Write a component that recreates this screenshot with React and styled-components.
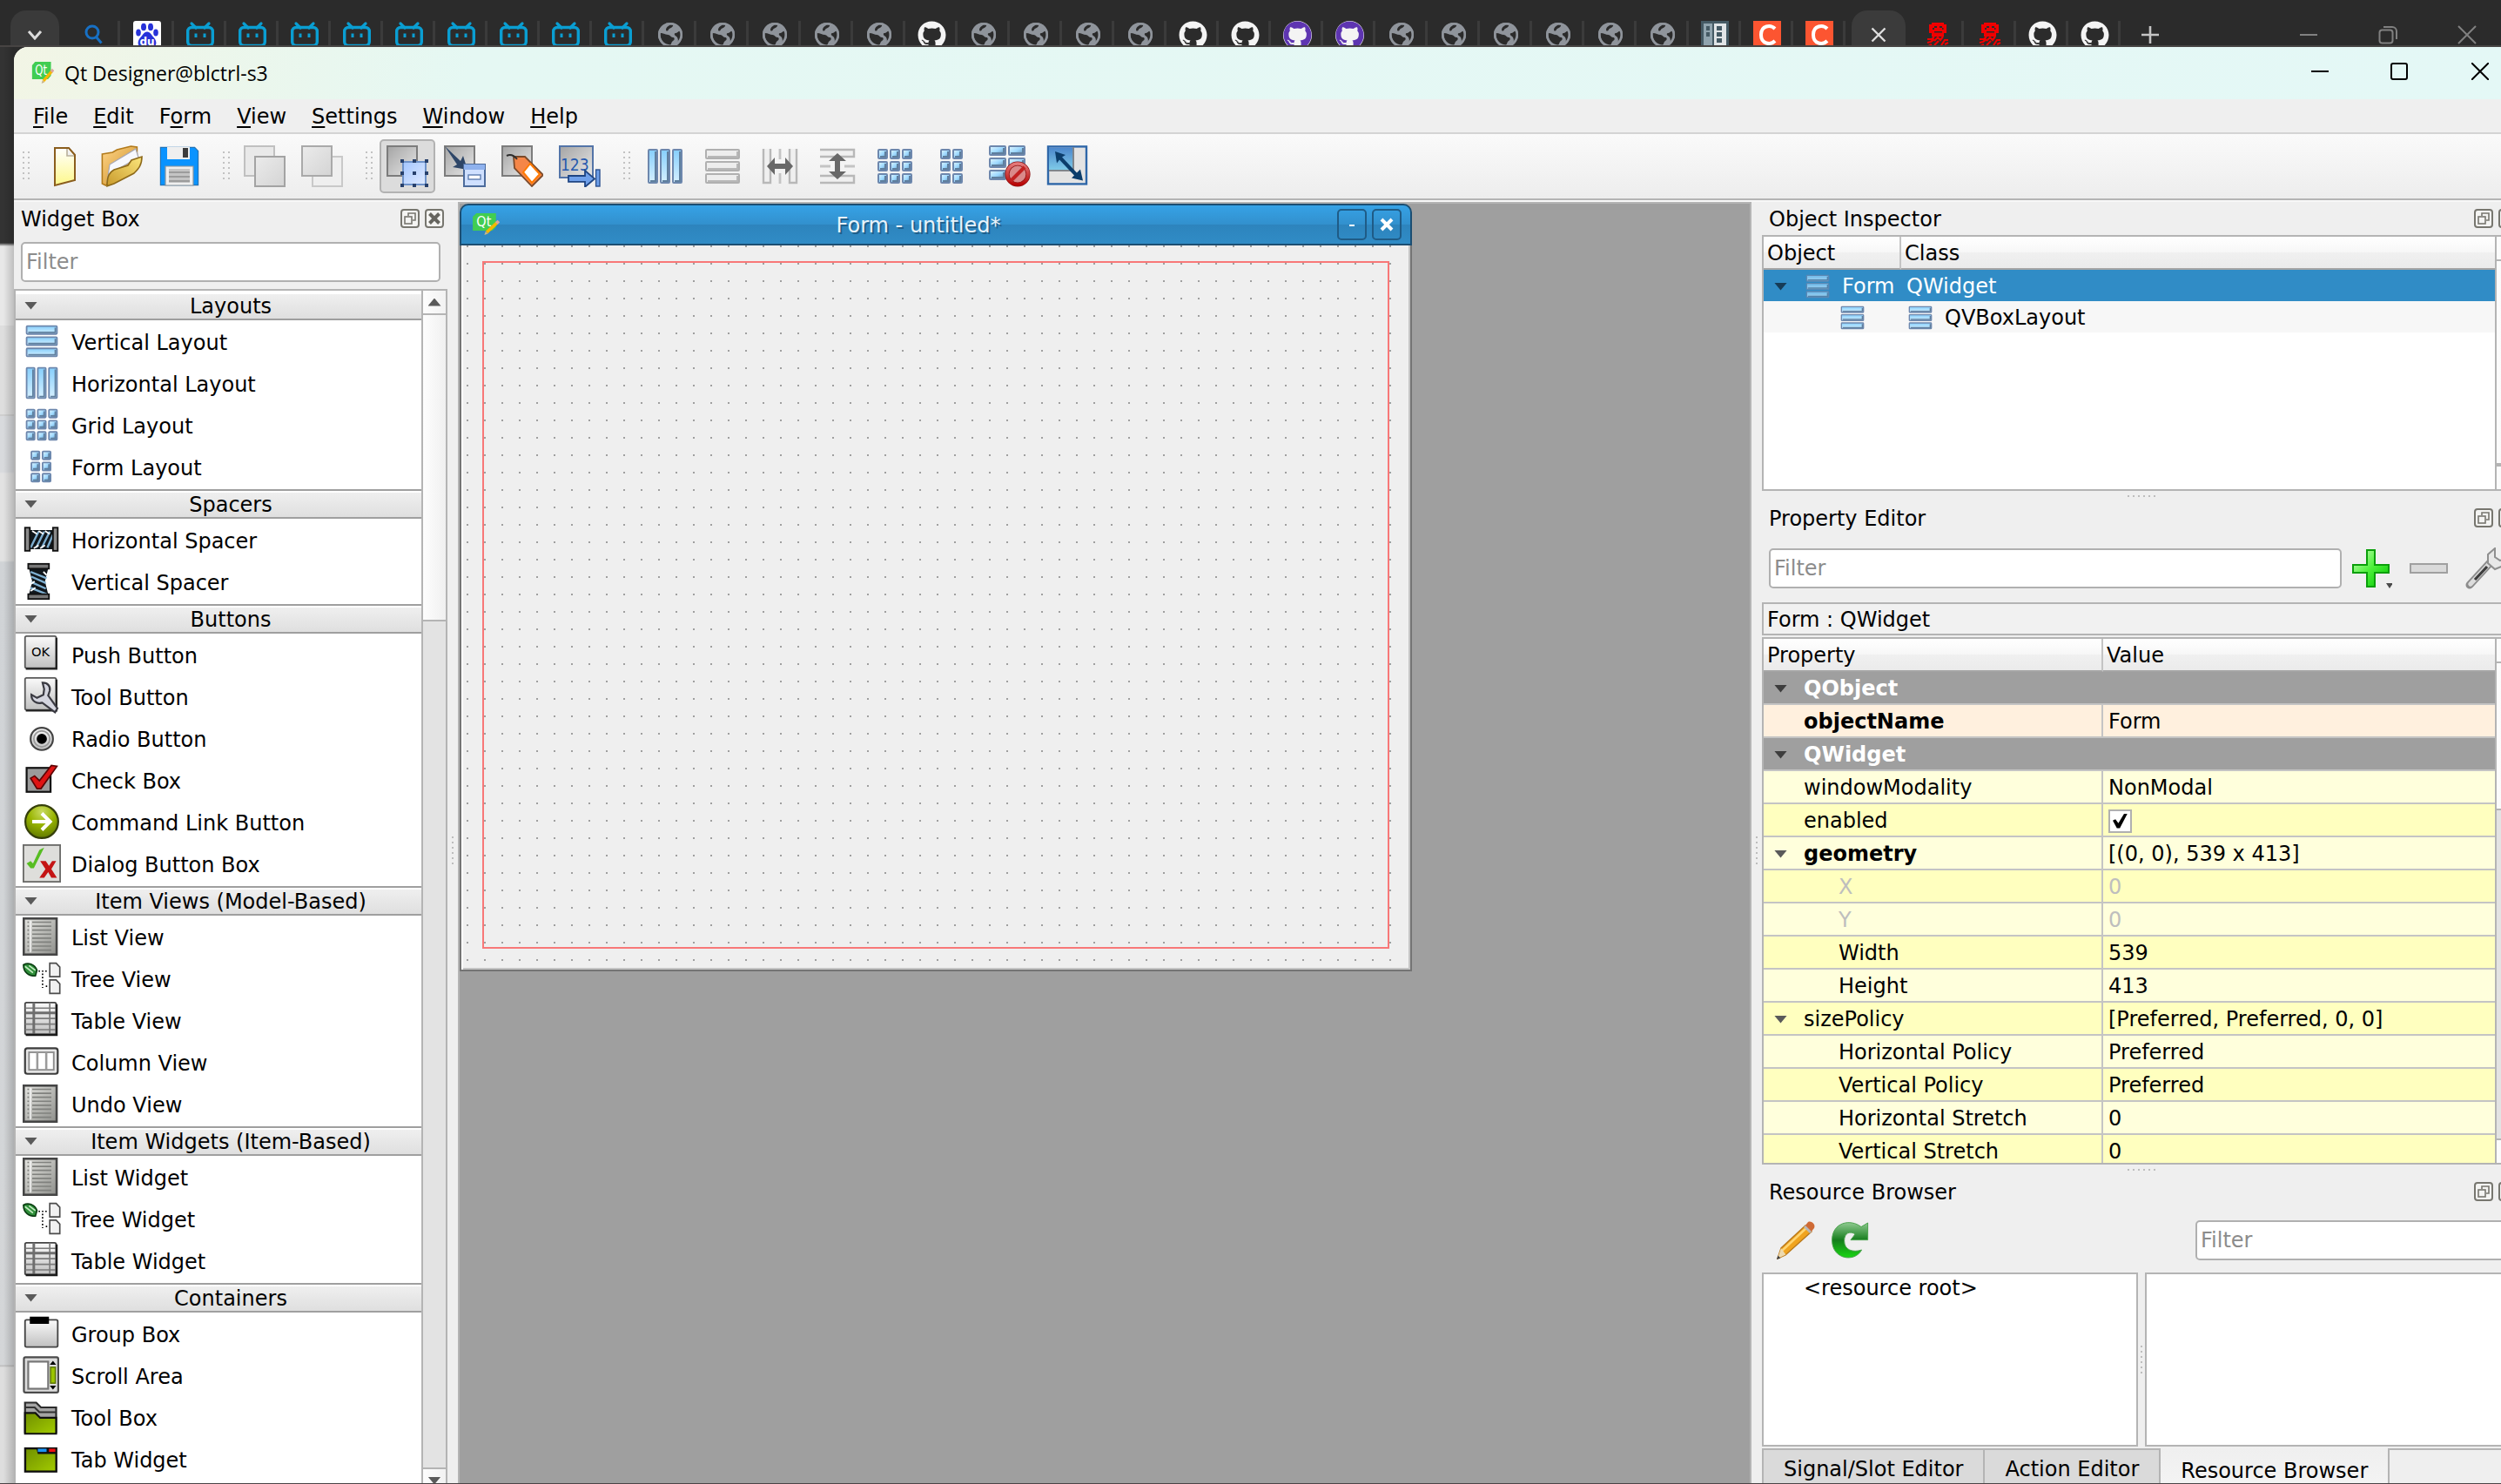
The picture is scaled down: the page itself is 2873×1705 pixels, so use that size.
import React, { useState } from 'react';
import styled, { createGlobalStyle } from 'styled-components';
import { FaGithub } from 'react-icons/fa';

const GlobalStyle = createGlobalStyle`
  * { box-sizing: border-box; }
  html, body { margin: 0; padding: 0; }
  body {
    font-family: "DejaVu Sans", sans-serif;
    font-size: 24px;
    line-height: 28px;
    color: #000;
    overflow: hidden;
  }
  button, input { font: inherit; color: inherit; }
  svg { display: block; flex: none; }
`;

/* ---------- shared gradients ---------- */

const Gradients = () => (
  <HiddenSvg aria-hidden="true">
    <defs>
      <linearGradient id="paper" x1="0" y1="0" x2="0" y2="1">
        <stop offset="0" stopColor="#fff" /><stop offset="1" stopColor="#fdf88a" />
      </linearGradient>
      <linearGradient id="folder" x1="0" y1="0" x2="1" y2="1">
        <stop offset="0" stopColor="#ffd58a" /><stop offset="1" stopColor="#c98a1c" />
      </linearGradient>
      <linearGradient id="folderFront" x1="1" y1="0" x2="0" y2="1">
        <stop offset="0" stopColor="#fbe67c" /><stop offset="1" stopColor="#c99a2c" />
      </linearGradient>
      <linearGradient id="greySq" x1="1" y1="1" x2="0" y2="0">
        <stop offset="0" stopColor="#e8e8e8" /><stop offset="1" stopColor="#a4a4a4" />
      </linearGradient>
      <linearGradient id="greyPale" x1="0" y1="0" x2="1" y2="1">
        <stop offset="0" stopColor="#ebebeb" /><stop offset="1" stopColor="#d4d4d4" />
      </linearGradient>
      <linearGradient id="blueSq" x1="0" y1="0" x2="1" y2="1">
        <stop offset="0" stopColor="#a4c6ff" /><stop offset="1" stopColor="#dfeaff" />
      </linearGradient>
      <linearGradient id="cellBlue" x1="0" y1="0" x2="1" y2="1">
        <stop offset="0" stopColor="#e4f7ff" /><stop offset="0.5" stopColor="#9cd8ff" /><stop offset="1" stopColor="#557b9c" />
      </linearGradient>
      <linearGradient id="barBlue" x1="0" y1="0" x2="0" y2="1">
        <stop offset="0" stopColor="#86cffc" /><stop offset="1" stopColor="#d6f0ff" />
      </linearGradient>
      <linearGradient id="lightBtn" x1="0" y1="0" x2="0" y2="1">
        <stop offset="0" stopColor="#fafafa" /><stop offset="1" stopColor="#c0c0c0" />
      </linearGradient>
      <linearGradient id="darkList" x1="0" y1="0" x2="1" y2="1">
        <stop offset="0" stopColor="#e4e4e0" /><stop offset="1" stopColor="#8f908c" />
      </linearGradient>
      <linearGradient id="lime" x1="0" y1="0" x2="1" y2="1">
        <stop offset="0" stopColor="#6f8f00" /><stop offset="1" stopColor="#a3cc00" />
      </linearGradient>
      <radialGradient id="limeBall" cx="0.5" cy="0.2" r="0.8">
        <stop offset="0" stopColor="#c9db62" /><stop offset="0.5" stopColor="#98b400" /><stop offset="1" stopColor="#627a00" />
      </radialGradient>
      <linearGradient id="plusGreen" x1="0" y1="0" x2="1" y2="1">
        <stop offset="0" stopColor="#d2ffc4" /><stop offset="0.5" stopColor="#4df03a" /><stop offset="1" stopColor="#00c400" />
      </linearGradient>
      <linearGradient id="reloadGreen" x1="0" y1="0" x2="0" y2="1">
        <stop offset="0" stopColor="#8fca90" /><stop offset="0.5" stopColor="#157d1c" /><stop offset="1" stopColor="#19d613" />
      </linearGradient>
      <linearGradient id="screenBlue" x1="0" y1="0" x2="0" y2="1">
        <stop offset="0" stopColor="#4b86cc" /><stop offset="1" stopColor="#7fcbe8" />
      </linearGradient>
      <linearGradient id="redBall" x1="0" y1="0" x2="0" y2="1">
        <stop offset="0" stopColor="#e47a7a" /><stop offset="1" stopColor="#b80505" />
      </linearGradient>
    </defs>
  </HiddenSvg>
);

/* ---------- icons ---------- */

const Icon = ({ size = 48, children }) => (
  <svg width={size} height={size} viewBox="0 0 24 24" aria-hidden="true">{children}</svg>
);

const Cell = ({ x, y, w, h, grey }) => (
  <g>
    <rect x={x + 0.5} y={y + 0.5} width={w - 1} height={h - 1} rx="0.5"
      fill={grey ? '#ededed' : w > 12 || h > 12 ? 'url(#barBlue)' : 'url(#cellBlue)'}
      stroke={grey ? '#b0b0b0' : '#6d87ad'} />
    <path d={`M${x + 1.5} ${y + h - 1.5}H${x + w - 1.5}V${y + 1.5}`} fill="none"
      stroke={grey ? '#b8b8b8' : '#5f7f9e'} strokeWidth="1" />
  </g>
);

const VLayout = ({ size, grey }) => (
  <Icon size={size}>{[2, 9, 16].map((y) => <Cell key={y} x={2} y={y} w={20} h={6} grey={grey} />)}</Icon>
);

const HLayout = ({ size, grey }) => (
  <Icon size={size}>{[2, 9, 16].map((x) => <Cell key={x} x={x} y={2} w={6} h={20} grey={grey} />)}</Icon>
);

const GridLayout = ({ size }) => (
  <Icon size={size}>
    {[2, 9, 16].map((y) => [2, 9, 16].map((x) => <Cell key={x + '-' + y} x={x} y={y} w={6} h={6} />))}
  </Icon>
);

const FormLayout = ({ size }) => (
  <Icon size={size}>
    {[2, 9, 16].map((y) => [5, 12].map((x) => <Cell key={x + '-' + y} x={x} y={y} w={6} h={6} />))}
  </Icon>
);

const GreySquare = () => (
  <rect x="0.5" y="0.5" width="17" height="17" fill="url(#greySq)" stroke="#7c7c7c" />
);

const NewIcon = () => (
  <Icon>
    <path d="M6.500 1.500h8l3.500 4v14.500l-11.500 3z" fill="url(#paper)" stroke="#8a5d1d" />
    <path d="M13.500 2v4h4" fill="#f1f1f1" stroke="#b9b09a" strokeWidth="0.8" />
  </Icon>
);

const OpenIcon = () => (
  <Icon>
    <path d="M0.700 5l6-1 2.500-1.500 8-2 3.500.500v9l-18 13-2-1z" fill="url(#folder)" stroke="#b27a1b" strokeWidth="0.8" />
    <path d="M5 11l15-9 1.500 5-16 9-2 5z" fill="#f7f8fd" stroke="#a8a8b4" strokeWidth="0.6" />
    <path d="M3.500 23.400c0-6 1.500-8 4-9.400l8-2.500 2-3 6-2c0 5-2 7-4.500 9.500L7.500 22z" fill="url(#folderFront)" stroke="#8e6a1a" strokeWidth="0.8" />
  </Icon>
);

const SaveIcon = () => (
  <Icon>
    <path d="M1.200 1.200h19.600l2 2v19.600H1.200z" fill="#0a93ff" stroke="#2272b4" strokeWidth="0.6" />
    <path d="M5 1h13v7H5z" fill="#efefef" />
    <path d="M14 1.500h3v5.500h-3z" fill="#3c3c3c" />
    <path d="M4 12h16v11H4z" fill="#efefef" stroke="#8a949c" strokeWidth="0.6" />
    <path d="M6 13.500h12v8H6z" fill="#c4c4c4" />
    <path d="M6 15.500h12M6 18h12M6 20.500h12" stroke="#8f8f8f" strokeWidth="0.8" />
  </Icon>
);

const FrontIcon = ({ back }) => (
  <Icon>
    {back ? (
      <>
        <rect x="6.500" y="6.500" width="17" height="17" fill="#efefef" stroke="#c9c9c9" />
        <rect x="0.500" y="0.500" width="17" height="17" fill="url(#greyPale)" stroke="#a9a9a9" />
      </>
    ) : (
      <>
        <rect x="0.500" y="0.500" width="17" height="17" fill="#e9e9e9" stroke="#c0c0c0" />
        <rect x="6.500" y="6.500" width="17" height="17" fill="url(#greyPale)" stroke="#a3a3a3" />
      </>
    )}
  </Icon>
);

const EditWidgetsIcon = () => (
  <Icon>
    <GreySquare />
    <rect x="9.500" y="9.500" width="13" height="13" fill="url(#blueSq)" stroke="#6e92c9" />
    {[8, 15, 22].map((y) => [8, 15, 22].map((x) => (
      <rect key={x + '-' + y} x={x} y={y} width="2" height="2" fill="#27406b" />
    )))}
  </Icon>
);

const SignalsIcon = () => (
  <Icon>
    <GreySquare />
    <path d="M0.500 0.500l9 8.500 1.500-3 2.500 8-8.500-1.500 2.500-1.500z" fill="#2e4668" />
    <rect x="11.500" y="11" width="12" height="12.500" fill="#cfe0ff" stroke="#4d6c9c" />
    <rect x="11.500" y="11" width="12" height="3" fill="#8fb2ee" />
    <rect x="14" y="17" width="7" height="2.500" fill="#fff" stroke="#5d7db0" strokeWidth="0.700" />
  </Icon>
);

const BuddyIcon = () => (
  <Icon>
    <GreySquare />
    <path d="M7 6.500h6.500L24 17l-6.500 6.500L7.500 13z" fill="#f58648" stroke="#7b4a2a" strokeWidth="0.900" />
    <path d="M16.500 10.500l5.500 6-4.500 5-5-6z" fill="#fff" stroke="#ff7a00" strokeWidth="1" />
    <path d="M3 6c2-1 4-.500 6 2" fill="none" stroke="#2e2e2e" />
  </Icon>
);

const TabOrderIcon = () => (
  <Icon>
    <rect x="0.500" y="0.500" width="19" height="18" fill="url(#greySq)" stroke="#5374a8" />
    <text x="1" y="14.500" fontSize="9.500" fontFamily="DejaVu Sans Condensed, DejaVu Sans, sans-serif" fill="#2559ae">123</text>
    <path d="M5.500 17.500h9.500v-3l5.500 4.700-5.500 4.700v-3H5.500z" fill="#6fa0ea" stroke="#1f4583" strokeWidth="0.900" />
    <rect x="21.300" y="14" width="2.200" height="9.500" fill="#6fa0ea" stroke="#2b518f" strokeWidth="0.700" />
  </Icon>
);

const SplitHIcon = () => (
  <Icon>
    <path d="M2.500 2v19.500h4V2M21.500 2v19.500h-4V2" fill="#f0f0f0" stroke="#b8b8b8" strokeWidth="1.200" />
    <path d="M12 2v20" stroke="#c4c4c4" strokeWidth="1.400" strokeDasharray="6 8" />
    <path d="M4.500 12l4.500-5v3.500h6V7l4.500 5-4.500 5v-3.500H9V17z" fill="#686868" />
  </Icon>
);

const SplitVIcon = () => (
  <Icon>
    <path d="M2 2.500h19.500v4H2M2 21.500h19.500v-4H2" fill="#f0f0f0" stroke="#b8b8b8" strokeWidth="1.200" />
    <path d="M2 12h20" stroke="#c4c4c4" strokeWidth="1.400" strokeDasharray="6 8" />
    <path d="M12 4.500l5 4.500h-3.500v6H17l-5 4.500L7 15h3.500V9H7z" fill="#686868" />
  </Icon>
);

const BreakIcon = () => (
  <Icon>
    {[0, 7, 14].map((y) => [0, 11].map((x) => <Cell key={x + '-' + y} x={x} y={y} w={10} h={6} />))}
    <circle cx="16.500" cy="16.500" r="6" fill="#d98a8a" stroke="#8e1414" strokeWidth="2.600" />
    <circle cx="16.500" cy="16.500" r="6" fill="none" stroke="url(#redBall)" strokeWidth="1.800" />
    <path d="M12.500 20.500l8-8" stroke="#c22222" strokeWidth="2" />
  </Icon>
);

const AdjustIcon = () => (
  <Icon>
    <rect x="1" y="0.700" width="22" height="21.500" fill="#e3e3e3" stroke="#2f67a8" strokeWidth="1.200" />
    <path d="M1.500 1.200h14v13h-14z" fill="url(#screenBlue)" />
    <path d="M15.500 1v13.500H1.500" fill="none" stroke="#80868c" strokeWidth="1" />
    <path d="M5 3.500l6 2-2 1.200 8.500 9 2-2 1.500 6.500-6.500-1.500 1.500-1.500-8.500-9-1.500 2z" fill="#0b3d6b" />
  </Icon>
);

const HSpacer = ({ size }) => (
  <Icon size={size}>
    <rect x="4" y="6" width="16" height="12" fill="#10161b" />
    <path d="M5 17l5-10M8.500 17l5-10M12 17l5-10M15.500 17l3.500-8" stroke="#7fb0d2" strokeWidth="1.300" />
    <path d="M6 6.500l3 2M10 6.500l3 2M14 6.500l3 2M7 17.500l3-2M11 17.500l3-2" stroke="#fff" strokeWidth="1" />
    <rect x="1.500" y="4.500" width="3" height="14.500" fill="#8a8a8a" stroke="#111" />
    <rect x="19" y="4.500" width="3" height="14.500" fill="#8a8a8a" stroke="#111" />
  </Icon>
);

const VSpacer = ({ size }) => (
  <Icon size={size}>
    <path d="M4 4h12l-2 8 2 8H4l2-8z" fill="#10161b" />
    <path d="M5 6l10 4M5.500 9l9 4M5.500 12.500l9 4M5 16l10 4" stroke="#7fb0d2" strokeWidth="1.300" />
    <path d="M4.500 14l3-2M13 6l2 2M5 18l3-2" stroke="#fff" />
    <rect x="3.500" y="1" width="13" height="3" fill="#777" stroke="#111" />
    <rect x="3.500" y="20" width="13" height="3" fill="#777" stroke="#111" />
  </Icon>
);

const PushButtonIcon = ({ size }) => (
  <Icon size={size}>
    <rect x="1.500" y="0.500" width="19.500" height="20" rx="1" fill="url(#lightBtn)" stroke="#5a5a5a" />
    <path d="M2 20.900h19.200V1.500" fill="none" stroke="#222" strokeWidth="1.200" />
    <text x="11.200" y="13" fontSize="8" textAnchor="middle" fontFamily="DejaVu Sans, sans-serif">OK</text>
  </Icon>
);

const ToolButtonIcon = ({ size }) => (
  <Icon size={size}>
    <rect x="1.500" y="0.500" width="19.500" height="20" rx="1" fill="url(#lightBtn)" stroke="#5a5a5a" />
    <path d="M2 20.900h19.200V1.500" fill="none" stroke="#222" strokeWidth="1.200" />
    <path d="M12.500 3.500c3.500 0 5 2.500 4.500 5l-1 3 5.800 8-1.500 2.500-8-6c-3.500 1-7-1-6.800-5l3.500 2 4-2 .500-3.500z" fill="#d4d5df" stroke="#3a3a42" strokeWidth="1.200" />
  </Icon>
);

const RadioIcon = ({ size }) => (
  <Icon size={size}>
    <circle cx="12" cy="12.500" r="7" fill="url(#lightBtn)" stroke="#444" strokeWidth="1.200" />
    <circle cx="12" cy="12.500" r="5" fill="none" stroke="#9a9a9a" />
    <circle cx="12" cy="12.500" r="3.200" fill="#000" />
  </Icon>
);

const CheckIcon = ({ size }) => (
  <Icon size={size}>
    <rect x="2.500" y="4.500" width="15" height="15" fill="#9b9b9b" stroke="#111" strokeWidth="1.200" />
    <path d="M5 11l2.500-1.500 3 3L18 3l3.500.500L11.500 17.500H9z" fill="#df1414" stroke="#5c0505" strokeWidth="0.900" />
  </Icon>
);

const CommandLinkIcon = ({ size }) => (
  <Icon size={size}>
    <circle cx="12" cy="12" r="10.300" fill="url(#limeBall)" stroke="#353f0a" strokeWidth="1.200" />
    <path d="M6 12h10.500M12 6.800l5.200 5.200-5.200 5.200" fill="none" stroke="#fff" strokeWidth="2.200" />
  </Icon>
);

const DialogBoxIcon = ({ size }) => (
  <Icon size={size}>
    <rect x="0.500" y="0.500" width="23" height="23" fill="#dededb" stroke="#6b6b69" />
    <path d="M2.500 12l2.500-1.500 1.500 1.500L10.500 3.500l3-1.500L7 15H5z" fill="#57bd22" />
    <path d="M11 10.500h3.500l2 3 2-3H21l-3 5 3.500 5.500h-3.500l-2-3.500-2.500 3.500h-3l3.800-5.500z" fill="#c41414" />
  </Icon>
);

const ListIcon = ({ size }) => (
  <Icon size={size}>
    <rect x="0.700" y="0.700" width="20.600" height="22.600" fill="url(#darkList)" stroke="#454545" strokeWidth="1.400" />
    <path d="M3 3h1M6 3h12M3 5.500h1M6 5.500h12M3 8h1M6 8h12M3 10.500h1M6 10.500h12M3 13h1M6 13h12M3 15.500h1M6 15.500h12M3 18h1M6 18h12M3 20.500h1M6 20.500h12" stroke="#80817e" strokeWidth="0.900" />
    <path d="M4.900 2v20" stroke="#f4f4f4" strokeWidth="0.800" />
  </Icon>
);

const TreeIcon = ({ size }) => (
  <Icon size={size}>
    <path d="M0.500 3.500c3-1.500 7-.500 8.500 3.500l-1 3.500c-4 0-7.500-2-7.500-7z" fill="#2f8f3a" stroke="#0b3d12" strokeWidth="0.900" />
    <path d="M1.500 4.500l5 4M4 4l4 3" stroke="#c4ecc2" strokeWidth="0.900" />
    <path d="M10 7.500h6M12.500 9v9M14.500 17h2" fill="none" stroke="#000" strokeWidth="0.900" strokeDasharray="0.900 1.200" />
    <path d="M17 2.500h4l2.300 2.500v6H17z" fill="#f1f1f1" stroke="#4c4c4c" strokeWidth="0.900" />
    <path d="M17 13h4l2.300 2.500v6H17z" fill="#f1f1f1" stroke="#4c4c4c" strokeWidth="0.900" />
  </Icon>
);

const TableIcon = ({ size }) => (
  <Icon size={size}>
    <rect x="1.500" y="1" width="19.500" height="20" rx="1" fill="url(#lightBtn)" stroke="#444" />
    <path d="M1.500 4.500h19.500M1.500 11h19.500M1.500 14.500h19.500M1.500 18h19.500M17 1v20" stroke="#7b7b7b" strokeWidth="0.900" />
    <path d="M1.500 7.500h19.500M7 1v20" stroke="#6e6e6e" strokeWidth="1.600" />
    <path d="M2 21.300h19.300V2" fill="none" stroke="#1b1b1b" strokeWidth="1.300" />
  </Icon>
);

const ColumnIcon = ({ size }) => (
  <Icon size={size}>
    <rect x="1.500" y="3.500" width="20.500" height="16" rx="1.500" fill="#e6e6e6" stroke="#3c3c3c" strokeWidth="1.200" />
    <rect x="4" y="6" width="15.500" height="11" fill="#fff" stroke="#8c8c8c" />
    <path d="M9.200 6v11M14.800 6v11" stroke="#9b9b9b" strokeWidth="1.400" />
  </Icon>
);

const GroupIcon = ({ size }) => (
  <Icon size={size}>
    <rect x="1.500" y="3.500" width="20.500" height="17" rx="1" fill="url(#lightBtn)" stroke="#444" />
    <rect x="4.500" y="1.500" width="12" height="4.500" fill="#000" />
  </Icon>
);

const ScrollIcon = ({ size }) => (
  <Icon size={size}>
    <rect x="0.800" y="0.800" width="21.500" height="22" rx="1" fill="#dcdcdc" stroke="#4b4b4b" strokeWidth="1.200" />
    <rect x="3.500" y="3.500" width="12.500" height="17" fill="#fff" stroke="#777" strokeWidth="1.200" />
    <path d="M19 3l2 2.500h-4zM19 21l2-2.500h-4z" fill="#000" />
    <rect x="17.500" y="7" width="3" height="10" fill="#9cc400" stroke="#5b7400" strokeWidth="0.800" />
  </Icon>
);

const ToolBoxIcon = ({ size }) => (
  <Icon size={size}>
    <path d="M1.500 3h7l3 3h9.500v15.500H1.500z" fill="#a5a5a5" stroke="#2b2b2b" strokeWidth="1.200" />
    <path d="M1.500 6h6l3 3h10.500" fill="none" stroke="#333" strokeWidth="1.200" />
    <path d="M1.500 9.500h6.500l3 3h10v10H1.500z" fill="url(#lime)" stroke="#111" strokeWidth="1.200" />
  </Icon>
);

const TabWidgetIcon = ({ size }) => (
  <Icon size={size}>
    <rect x="1.600" y="5.500" width="19.500" height="14.500" fill="url(#lime)" stroke="#111" strokeWidth="1.300" />
    <path d="M8.500 5h12.500v4H9.500z" fill="#111" />
    <rect x="9.500" y="5.700" width="5.500" height="2" fill="#1b95f5" />
    <rect x="16.500" y="5.700" width="4" height="2" fill="#f01010" />
  </Icon>
);

const PlusIcon = () => (
  <Icon>
    <path d="M9.500 1.500h4.500v8.500h8v4.500h-8v8H9.500v-8h-8V10h8z" fill="url(#plusGreen)" stroke="#0a9f0a" />
    <path d="M20.500 20.500h4l-2 3z" fill="#4a4a4a" />
  </Icon>
);

const MinusIcon = () => (
  <Icon><rect x="1.500" y="9.500" width="21" height="5" fill="#dadada" stroke="#a0a0a0" /></Icon>
);

const WrenchIcon = () => (
  <Icon>
    <path d="M2.500 21.500L14 9" stroke="#8c8c8c" strokeWidth="4.500" strokeLinecap="round" />
    <path d="M3 21L14 9" stroke="#dcdcdc" strokeWidth="2.600" strokeLinecap="round" />
    <path d="M5.500 18.500l7-7.500" stroke="#3c3c3c" strokeWidth="1.600" />
    <path d="M13 9V4l4-3.500v5l3 2 4-2-2 5-5 2z" fill="#e8e8e8" stroke="#8f8f8f" />
  </Icon>
);

const PencilIcon = () => (
  <Icon>
    <path d="M1.500 22.500l2-6L17.500 3.500l3.500 3.500L6 20.500z" fill="#f0a41f" stroke="#b9791c" strokeWidth="0.700" />
    <path d="M3.500 18.500L18.500 4.500" stroke="#ffd572" strokeWidth="1.200" />
    <path d="M1.500 22.500l2-6 2.700 3.800z" fill="#edd9ae" />
    <path d="M1 23l.700-2.300 1.500 1.500z" fill="#3f3f3f" />
    <path d="M17 4l3.500 3.500 2-2.500c1-2-1.500-4.500-3.500-3.500z" fill="#cf6a35" />
    <path d="M16.500 4.500l3.500 3.500 1-1-3.500-3.500z" fill="#b8b8b8" />
  </Icon>
);

const ReloadIcon = () => (
  <Icon>
    <path d="M17.800 17.500c-4 7.500-17 5.500-17-5.500C0.800 1.500 11.500 -0.500 17.500 4.300L21.300 2v9.800H11.500l2.600-3.400c-3-1.800-6.300-.800-6.300 3.900 0 5.400 5 6.900 10 5.200z" fill="url(#reloadGreen)" stroke="#4ba34d" strokeWidth="0.500" />
  </Icon>
);

const QtIcon = ({ width = 30 }) => (
  <svg width={width} height="26" viewBox="0 0 30 26" preserveAspectRatio="none" aria-hidden="true">
    <path d="M5 0h21v16l-4 4H1V4z" fill="#41cd52" />
    <text x="13" y="15.500" fontSize="15" textAnchor="middle" fill="#fff" fontFamily="DejaVu Sans Condensed, DejaVu Sans, sans-serif">Qt</text>
    <path d="M16 22L27.500 10.500" stroke="#f6b700" strokeWidth="3.600" />
    <path d="M26.500 11.500l2.500-2.500" stroke="#d9a5a0" strokeWidth="3.600" />
    <path d="M13.500 25l1.200-4 2.800 2.500z" fill="#c9b48a" />
  </svg>
);

const DockFloat = () => (
  <svg width="22" height="22" viewBox="0 0 22 22" aria-hidden="true">
    <rect x="1" y="1" width="20" height="20" rx="3" fill="#f4f4f2" stroke="#77766f" strokeWidth="2" />
    <path d="M9 8V5h8v8h-3" fill="none" stroke="#77766f" strokeWidth="1.600" />
    <rect x="5" y="9" width="8" height="8" fill="none" stroke="#77766f" strokeWidth="1.600" />
  </svg>
);

const DockClose = () => (
  <svg width="22" height="22" viewBox="0 0 22 22" aria-hidden="true">
    <rect x="1" y="1" width="20" height="20" rx="3" fill="#f4f4f2" stroke="#77766f" strokeWidth="2" />
    <path d="M5.500 5.500l11 11M16.500 5.500l-11 11" stroke="#66655f" strokeWidth="4" />
  </svg>
);

/* ---------- favicons of the browser behind ---------- */

const Fav = ({ children }) => (
  <svg width="32" height="32" viewBox="0 0 32 32" aria-hidden="true">{children}</svg>
);

const favicons = {
  search: (
    <Fav>
      <circle cx="15" cy="13" r="7" fill="none" stroke="#1770c4" strokeWidth="3" />
      <path d="M19.500 18.500l6 7" stroke="#1770c4" strokeWidth="3" />
    </Fav>
  ),
  baidu: (
    <Fav>
      <rect width="32" height="32" rx="3" fill="#fff" />
      <ellipse cx="12" cy="7" rx="3" ry="4.300" fill="#2732d9" />
      <ellipse cx="20" cy="7" rx="3" ry="4.300" fill="#2732d9" />
      <ellipse cx="6" cy="13.500" rx="2.800" ry="4" fill="#2732d9" />
      <ellipse cx="26" cy="13.500" rx="2.800" ry="4" fill="#2732d9" />
      <path d="M16 12.500c4 0 5 4 8 7 3 3 4 10-2 11-3 .400-9 .400-12 0-6-1-5-8-2-11 3-3 4-7 8-7z" fill="#2732d9" />
      <text x="16" y="28" fontSize="12" fontWeight="bold" textAnchor="middle" fill="#fff" fontFamily="DejaVu Sans, sans-serif">du</text>
    </Fav>
  ),
  bili: (
    <Fav>
      <path d="M6 3l5 5M26 3l-5 5" stroke="#0a9ed2" strokeWidth="3.200" strokeLinecap="round" />
      <rect x="1.700" y="7.500" width="28.600" height="21" rx="4.500" fill="none" stroke="#0a9ed2" strokeWidth="3.400" />
      <path d="M11 14.500v4.500M21 14.500v4.500" stroke="#0a9ed2" strokeWidth="3" />
    </Fav>
  ),
  globe: (
    <Fav>
      <circle cx="16" cy="16" r="14" fill="#8f949b" />
      <path d="M4.500 14c4 0 6 2 9 2 2.500 0 3 3 5.500 3s2 3 0 4-1.500 4-3.500 5.500C9 28.500 4 22 4.500 14z" fill="#2b2b2b" />
      <path d="M19 4.500c1 3-4 3.500-5 5.500s-3 2-3 0 2-4 5-5.500z" fill="#2b2b2b" />
      <path d="M28 12c-3-1-3 2-5.500 2s-2 2.500 0 3.500 3 4.500 2 6.500c3.500-3 4.500-8 3.500-12z" fill="#2b2b2b" />
      <circle cx="16" cy="16" r="12.700" fill="none" stroke="#8f949b" strokeWidth="2.600" />
    </Fav>
  ),
  github: <FaGithub size={33} color="#f4f4f4" />,
  githubPurple: <FaGithub size={33} color="#5e35b1" />,
  building: (
    <Fav>
      <rect width="32" height="32" fill="#455a64" />
      <rect x="3" y="3" width="10" height="29" fill="#90a4ae" />
      <rect x="15" y="3" width="14" height="29" fill="#e0e4e6" />
      <path d="M6 6h4v5H6zM6 13h4v5H6zM18 6h6v5h-6zM18 13h6v5h-6zM18 20h6v5h-6z" fill="#455a64" />
    </Fav>
  ),
  csdn: (
    <Fav>
      <rect width="32" height="32" fill="#fc5531" />
      <path d="M25 9c-5-5-16-4-16 7s11 12 16 7" fill="none" stroke="#fff" strokeWidth="4" />
    </Fav>
  ),
  octopus: (
    <Fav>
      <path d="M9 2h14v2h3v10h-3v4H9v-4H6V4h3z" fill="#f00000" />
      <path d="M12 6h3v2h-3zM18 6h3v2h-3zM12 12h9v1.500h-9zM10 8h2v2h-2zM21 8h1.500v2H21z" fill="#2b2b2b" />
      <path d="M4 21h5l3-3M12 23l4-4 3 3 3-4M4 25l4-1 4-3M12 28l5-5M20 28l4-6h4M5 29l4-2M24 27l4-2" fill="none" stroke="#f00000" strokeWidth="2.200" />
    </Fav>
  ),
};

const repeat = (kind, n) => Array(n).fill(kind);

const tabsBefore = [
  ...repeat('bili', 9), ...repeat('globe', 5), 'github', ...repeat('globe', 4),
  ...repeat('github', 2), ...repeat('githubPurple', 2), ...repeat('globe', 6),
  'building', ...repeat('csdn', 2),
];
const tabsAfter = ['octopus', 'octopus', 'github', 'github'];

const menus = [
  ['', 'F', 'ile'], ['', 'E', 'dit'], ['F', 'o', 'rm'], ['', 'V', 'iew'],
  ['', 'S', 'ettings'], ['', 'W', 'indow'], ['', 'H', 'elp'],
];

const toolGroups = [
  [['New', <NewIcon />], ['Open', <OpenIcon />], ['Save', <SaveIcon />]],
  [['Send to Back', <FrontIcon />], ['Bring to Front', <FrontIcon back />]],
  [['Edit Widgets', <EditWidgetsIcon />, true], ['Edit Signals/Slots', <SignalsIcon />],
    ['Edit Buddies', <BuddyIcon />], ['Edit Tab Order', <TabOrderIcon />]],
  [['Lay Out Horizontally', <HLayout size={48} />], ['Lay Out Vertically', <VLayout size={48} grey />],
    ['Horizontal Splitter', <SplitHIcon />], ['Vertical Splitter', <SplitVIcon />],
    ['Lay Out in a Grid', <GridLayout size={48} />], ['Lay Out in a Form', <FormLayout size={48} />],
    ['Break Layout', <BreakIcon />], ['Adjust Size', <AdjustIcon />]],
];

const categories = [
  { name: 'Layouts', items: [['Vertical Layout', VLayout], ['Horizontal Layout', HLayout], ['Grid Layout', GridLayout], ['Form Layout', FormLayout]] },
  { name: 'Spacers', items: [['Horizontal Spacer', HSpacer], ['Vertical Spacer', VSpacer]] },
  {
    name: 'Buttons',
    items: [['Push Button', PushButtonIcon], ['Tool Button', ToolButtonIcon], ['Radio Button', RadioIcon],
      ['Check Box', CheckIcon], ['Command Link Button', CommandLinkIcon], ['Dialog Button Box', DialogBoxIcon]],
  },
  {
    name: 'Item Views (Model-Based)',
    items: [['List View', ListIcon], ['Tree View', TreeIcon], ['Table View', TableIcon], ['Column View', ColumnIcon], ['Undo View', ListIcon]],
  },
  { name: 'Item Widgets (Item-Based)', items: [['List Widget', ListIcon], ['Tree Widget', TreeIcon], ['Table Widget', TableIcon]] },
  { name: 'Containers', items: [['Group Box', GroupIcon], ['Scroll Area', ScrollIcon], ['Tool Box', ToolBoxIcon], ['Tab Widget', TabWidgetIcon]] },
];

const properties = [
  { name: 'QObject', group: true },
  { name: 'objectName', value: 'Form', bg: '#fff0de', bold: true },
  { name: 'QWidget', group: true },
  { name: 'windowModality', value: 'NonModal', bg: '#ffffdc' },
  { name: 'enabled', check: true, bg: '#ffffbf' },
  { name: 'geometry', value: '[(0, 0), 539 x 413]', bg: '#ffffdc', bold: true, open: true },
  { name: 'X', value: '0', bg: '#ffffbf', sub: true, disabled: true },
  { name: 'Y', value: '0', bg: '#ffffdc', sub: true, disabled: true },
  { name: 'Width', value: '539', bg: '#ffffbf', sub: true },
  { name: 'Height', value: '413', bg: '#ffffdc', sub: true },
  { name: 'sizePolicy', value: '[Preferred, Preferred, 0, 0]', bg: '#ffffbf', open: true },
  { name: 'Horizontal Policy', value: 'Preferred', bg: '#ffffdc', sub: true },
  { name: 'Vertical Policy', value: 'Preferred', bg: '#ffffbf', sub: true },
  { name: 'Horizontal Stretch', value: '0', bg: '#ffffdc', sub: true },
  { name: 'Vertical Stretch', value: '0', bg: '#ffffbf', sub: true },
];

const DockHeader = ({ title }) => (
  <DockTitle>
    <DockName>{title}</DockName>
    <DockButton aria-label={'Float ' + title}><DockFloat /></DockButton>
    <DockButton aria-label={'Close ' + title}><DockClose /></DockButton>
  </DockTitle>
);

const ScrollBar = ({ thumb }) => (
  <ScrollTrack>
    <ScrollStep aria-label="Scroll up"><Triangle $up /></ScrollStep>
    <ScrollSpace><ScrollThumb $size={thumb} /></ScrollSpace>
    <ScrollStep $last aria-label="Scroll down"><Triangle /></ScrollStep>
  </ScrollTrack>
);

const App = () => {
  const [enabled, setEnabled] = useState(true);

  return (
    <Page>
      <GlobalStyle />
      <Gradients />

      <BrowserStrip>
        <TabSearch aria-label="Search tabs">
          <svg width="18" height="12" viewBox="0 0 18 12"><path d="M2 2l7 8 7-8" fill="none" stroke="#dcdcdc" strokeWidth="3" /></svg>
        </TabSearch>
        <BrowserTab $wide>{favicons.search}</BrowserTab>
        <BrowserTab $wide>{favicons.baidu}</BrowserTab>
        {tabsBefore.map((kind, i) => (
          <BrowserTab key={i}>
            {kind === 'githubPurple' ? <PurpleDisc>{favicons[kind]}</PurpleDisc> : favicons[kind]}
          </BrowserTab>
        ))}
        <ActiveTab aria-label="Close tab">
          <svg width="18" height="18" viewBox="0 0 18 18"><path d="M1.500 1.500l15 15M16.500 1.500l-15 15" stroke="#dedede" strokeWidth="2.400" /></svg>
        </ActiveTab>
        {tabsAfter.map((kind, i) => <BrowserTab key={i}>{favicons[kind]}</BrowserTab>)}
        <NewTab aria-label="New tab">
          <svg width="20" height="20" viewBox="0 0 20 20"><path d="M10 0v20M0 10h20" stroke="#c4c4c4" strokeWidth="2.600" /></svg>
        </NewTab>
        <BrowserControls>
          <svg width="22" height="22" viewBox="0 0 22 22"><path d="M1 11h20" stroke="#808080" strokeWidth="2" /></svg>
          <svg width="22" height="22" viewBox="0 0 22 22">
            <rect x="1.500" y="5.500" width="15" height="15" rx="3" fill="none" stroke="#808080" strokeWidth="2" />
            <path d="M6 2h10a5 5 0 0 1 5 5v9" fill="none" stroke="#808080" strokeWidth="2" />
          </svg>
          <svg width="22" height="22" viewBox="0 0 22 22"><path d="M1 1l20 20M21 1L1 21" stroke="#808080" strokeWidth="2" /></svg>
        </BrowserControls>
      </BrowserStrip>

      <Desktop>
        <BehindWindow />
        <Designer>
          <TitleBar>
            <QtIcon width={26} />
            <TitleText>Qt Designer@blctrl-s3</TitleText>
            <WindowControls>
              <WindowButton aria-label="Minimize">
                <svg width="20" height="20" viewBox="0 0 20 20"><path d="M0 10h20" stroke="#000" strokeWidth="2" /></svg>
              </WindowButton>
              <WindowButton aria-label="Maximize">
                <svg width="20" height="20" viewBox="0 0 20 20"><rect x="1" y="1" width="18" height="18" rx="2" fill="none" stroke="#000" strokeWidth="2" /></svg>
              </WindowButton>
              <WindowButton aria-label="Close">
                <svg width="20" height="20" viewBox="0 0 20 20"><path d="M0 0l20 20M20 0L0 20" stroke="#000" strokeWidth="2" /></svg>
              </WindowButton>
            </WindowControls>
          </TitleBar>

          <MenuBar>
            {menus.map(([before, key, after]) => (
              <MenuItem key={key + after}>{before}<u>{key}</u>{after}</MenuItem>
            ))}
          </MenuBar>

          <ToolBar>
            {toolGroups.map((group, i) => (
              <React.Fragment key={i}>
                <ToolHandle />
                {group.map(([label, icon, pressed]) => (
                  <ToolButton key={label} aria-label={label} $pressed={pressed}>{icon}</ToolButton>
                ))}
              </React.Fragment>
            ))}
          </ToolBar>

          <Workspace>
            <WidgetDock>
              <DockHeader title="Widget Box" />
              <WidgetFilterRow><FilterInput placeholder="Filter" aria-label="Filter widgets" /></WidgetFilterRow>
              <WidgetFrame>
                <WidgetList>
                  {categories.map((cat) => (
                    <section key={cat.name}>
                      <CategoryButton><Triangle /><span>{cat.name}</span></CategoryButton>
                      <ItemList>
                        {cat.items.map(([name, ItemIcon]) => (
                          <Item key={name}><ItemIcon size={44} /><ItemName>{name}</ItemName></Item>
                        ))}
                      </ItemList>
                    </section>
                  ))}
                </WidgetList>
                <ScrollBar thumb="352px" />
              </WidgetFrame>
            </WidgetDock>
            <SplitterV><GripV /></SplitterV>

            <MdiArea>
              <FormWindow>
                <FormTitle>
                  <QtIcon width={32} />
                  <FormName>Form - untitled*</FormName>
                  <FormButton aria-label="Minimize form">
                    <svg width="20" height="20" viewBox="0 0 20 20"><path d="M7 11h6" stroke="#fff" strokeWidth="2" /></svg>
                  </FormButton>
                  <FormButton aria-label="Close form">
                    <svg width="20" height="20" viewBox="0 0 20 20"><path d="M4 4l12 12M16 4L4 16" stroke="#fff" strokeWidth="4" /></svg>
                  </FormButton>
                </FormTitle>
                <FormBody><DotGrid><LayoutOutline /></DotGrid></FormBody>
              </FormWindow>
            </MdiArea>

            <SplitterV><GripV /></SplitterV>
            <RightDocks>
              <InspectorDock>
                <DockHeader title="Object Inspector" />
                <Frame>
                  <TablePane>
                    <Table>
                      <colgroup><ColObject /><col /></colgroup>
                      <thead><tr><HeadCell>Object</HeadCell><HeadCell>Class</HeadCell></tr></thead>
                      <tbody>
                        <TreeRow $selected>
                          <td><TreeCell><Triangle /><TreeIconBox><VLayout size={32} /></TreeIconBox>Form</TreeCell></td>
                          <td><ClassCell>QWidget</ClassCell></td>
                        </TreeRow>
                        <TreeRow>
                          <td><ChildCell><VLayout size={32} /></ChildCell></td>
                          <td><ClassCell><VLayout size={32} />QVBoxLayout</ClassCell></td>
                        </TreeRow>
                      </tbody>
                    </Table>
                  </TablePane>
                  <ScrollBar thumb="100%" />
                </Frame>
              </InspectorDock>
              <SplitterH><GripH /></SplitterH>

              <PropertyDock>
                <DockHeader title="Property Editor" />
                <PropertyTools>
                  <FilterInput placeholder="Filter" aria-label="Filter properties" />
                  <ToolButton aria-label="Add dynamic property"><PlusIcon /></ToolButton>
                  <ToolButton aria-label="Remove dynamic property"><MinusIcon /></ToolButton>
                  <ToolButton aria-label="Configure"><WrenchIcon /></ToolButton>
                </PropertyTools>
                <ObjectLabel>Form : QWidget</ObjectLabel>
                <Frame>
                  <TablePane>
                    <Table>
                      <colgroup><ColProperty /><col /></colgroup>
                      <thead><tr><HeadCell>Property</HeadCell><HeadCell>Value</HeadCell></tr></thead>
                      <tbody>
                        {properties.map((p) => (p.group ? (
                          <GroupRow key={p.name}>
                            <td colSpan={2}><NameCell $bold><Triangle />{p.name}</NameCell></td>
                          </GroupRow>
                        ) : (
                          <PropertyRow key={p.name} $bg={p.bg} $disabled={p.disabled}>
                            <td>
                              <NameCell $bold={p.bold} $sub={p.sub} $plain={!p.open}>
                                {p.open && <Triangle />}{p.name}
                              </NameCell>
                            </td>
                            <td>
                              <ValueCell>
                                {p.check
                                  ? <CheckInput type="checkbox" aria-label={p.name} checked={enabled} onChange={(e) => setEnabled(e.target.checked)} />
                                  : p.value}
                              </ValueCell>
                            </td>
                          </PropertyRow>
                        )))}
                      </tbody>
                    </Table>
                  </TablePane>
                  <ScrollBar thumb="31%" />
                </Frame>
              </PropertyDock>
              <SplitterH><GripH /></SplitterH>

              <ResourceDock>
                <DockHeader title="Resource Browser" />
                <ResourceTools>
                  <ToolButton aria-label="Edit resources"><PencilIcon /></ToolButton>
                  <ToolButton aria-label="Reload"><ReloadIcon /></ToolButton>
                  <ResourceFilter><FilterInput placeholder="Filter" aria-label="Filter resources" /></ResourceFilter>
                </ResourceTools>
                <ResourceLists>
                  <ResourceTree>&lt;resource root&gt;</ResourceTree>
                  <InnerSplitter><GripV /></InnerSplitter>
                  <ResourceFiles />
                </ResourceLists>
                <DockTabs>
                  <DockTab>Signal/Slot Editor</DockTab>
                  <DockTab>Action Editor</DockTab>
                  <DockTab $active>Resource Browser</DockTab>
                  <TabFiller />
                </DockTabs>
              </ResourceDock>
            </RightDocks>
          </Workspace>
        </Designer>
      </Desktop>
    </Page>
  );
};

/* ---------- page and browser ---------- */

const HiddenSvg = styled.svg`
  position: absolute;
  width: 0;
  height: 0;
`;

const Page = styled.div`
  display: flex;
  flex-direction: column;
  height: 100vh;
  overflow: hidden;
  background: #2b2b2b;
  border-bottom: 1px solid #4a4446;
`;

const BrowserStrip = styled.header`
  display: flex;
  flex: none;
  height: 54px;
  padding: 12px 28px 0 12px;
  overflow: hidden;
  border-bottom: 2px solid #474443;
`;

const BareButton = styled.button`
  display: flex;
  align-items: center;
  justify-content: center;
  flex: none;
  padding: 0;
  border: none;
  background: none;
`;

const TabSearch = styled(BareButton)`
  width: 56px;
  height: 56px;
  margin-right: 8px;
  border-radius: 18px 18px 0 0;
  background: #3a3a3a;
`;

const BrowserTab = styled.div`
  display: flex;
  align-items: flex-start;
  justify-content: center;
  flex: none;
  width: ${(p) => (p.$wide ? '62px' : '60px')};
  height: 44px;
  padding-top: 12px;
  background: linear-gradient(#3b3b3b, #3b3b3b) right 12px / 3px 44px no-repeat;
`;

const PurpleDisc = styled.span`
  display: block;
  border-radius: 50%;
  background: #f4f4f4;
`;

const ActiveTab = styled(BareButton)`
  width: 62px;
  height: 56px;
  margin: 0 7px;
  border-radius: 18px 18px 0 0;
  background: #3b3b3b;
`;

const NewTab = styled(BareButton)`
  width: 60px;
  height: 56px;
  margin-left: 4px;
`;

const BrowserControls = styled.div`
  display: flex;
  gap: 69px;
  padding-top: 17px;
  margin-left: auto;
`;

const Desktop = styled.div`
  display: flex;
  flex: 1;
  min-height: 0;
`;

const BehindWindow = styled.div`
  flex: none;
  width: 16px;
  background:
    linear-gradient(to right, transparent 4px, rgba(0, 0, 0, 0.18)),
    linear-gradient(#333 0 225px, #e8e8e8 229px 320px, #dedede 320px 422px, #cfcfcf 422px 424px,
      #d8dadd 424px 488px, #e2e2e2 490px 590px, #d0d3d6 592px, #d4d6d8 1514px, #b9b9b9 1515px, #dedede 1517px);
`;

/* ---------- designer window ---------- */

const Designer = styled.main`
  display: flex;
  flex-direction: column;
  flex: 1;
  min-width: 0;
  margin-right: -23px;
  background: #efefef;
  border-radius: 16px 0 0 0;
  overflow: hidden;
`;

const TitleBar = styled.div`
  display: flex;
  align-items: center;
  flex: none;
  height: 60px;
  padding: 0 37px 0 20px;
  background: linear-gradient(100deg, #f2f5e5 0, #e5f8f3 520px, #e4f8f6 100%);
`;

const TitleText = styled.h1`
  margin: 0 0 0 12px;
  font-family: "Open Sans", sans-serif;
  font-size: 23px;
  font-weight: 400;
  line-height: 32px;
`;

const WindowControls = styled.div`
  display: flex;
  gap: 27px;
  margin-left: auto;
  padding-bottom: 4px;
`;

const WindowButton = styled(BareButton)`
  width: 64px;
  height: 40px;
  &:last-child { width: 20px; margin-left: 24px; }
`;

const MenuBar = styled.nav`
  display: flex;
  align-items: center;
  gap: 29px;
  flex: none;
  height: 40px;
  padding: 2px 0 0 22px;
  border-bottom: 2px solid #d4d4d4;
`;

const MenuItem = styled(BareButton)`
  display: block;
  white-space: nowrap;
  u { text-decoration-thickness: 2px; text-underline-offset: 3px; }
`;

const ToolBar = styled.div`
  display: flex;
  align-items: center;
  gap: 2px;
  flex: none;
  height: 76px;
  background: linear-gradient(#fafafa, #ededed);
  border-bottom: 2px solid #b4b4b4;
`;

const ToolHandle = styled.span`
  flex: none;
  width: 10px;
  height: 34px;
  margin: 0 4px 0 16px;
  background: conic-gradient(from 270deg at 2px 2px, #c2c2c2 0 90deg, transparent 90deg) 0 0 / 6px 6px;
  &:first-child { margin-left: 10px; }
`;

const ToolButton = styled(BareButton)`
  width: 64px;
  height: 62px;
  border: 2px solid ${(p) => (p.$pressed ? '#b2b2b2' : 'transparent')};
  border-radius: 5px;
  background: ${(p) => (p.$pressed ? '#dcdcdc' : 'none')};
`;

/* the lower edge of the window runs past the bottom of the screen */
const Workspace = styled.div`
  display: flex;
  flex: 1;
  min-height: 0;
  margin-bottom: -18px;
  border-top: 2px solid #f7f7f7;
`;

const Triangle = styled.span`
  flex: none;
  width: 15px;
  height: 9px;
  background: #5a5a5a;
  clip-path: ${(p) => (p.$up ? 'polygon(50% 0, 100% 100%, 0 100%)' : 'polygon(0 0, 100% 0, 50% 100%)')};
`;

/* ---------- docks ---------- */

const DockTitle = styled.div`
  display: flex;
  align-items: center;
  gap: 6px;
  flex: none;
  height: 38px;
  padding: 0 4px 0 8px;
`;

const DockName = styled.h2`
  flex: 1;
  margin: 0;
  padding-top: 2px;
  font-size: 24px;
  font-weight: 400;
`;

const DockButton = styled(BareButton)`
  width: 22px;
  height: 22px;
`;

const FilterInput = styled.input`
  flex: 1;
  min-width: 0;
  width: 100%;
  height: 46px;
  padding: 0 4px;
  border: 2px solid #b0b0b0;
  border-radius: 5px;
  background: #fff;
  outline: none;
  &::placeholder { color: #8c8c8c; opacity: 1; }
`;

const SplitterV = styled.div`
  display: flex;
  align-items: center;
  justify-content: center;
  flex: none;
  width: 12px;
`;

const GripV = styled.span`
  width: 2px;
  height: 32px;
  background: repeating-linear-gradient(#bdbdbd 0 2px, transparent 2px 6px);
`;

const SplitterH = styled.div`
  display: flex;
  align-items: center;
  justify-content: center;
  flex: none;
  height: 12px;
  margin-left: 12px;
`;

const GripH = styled.span`
  width: 32px;
  height: 2px;
  background: repeating-linear-gradient(to right, #bdbdbd 0 2px, transparent 2px 6px);
`;

const WidgetDock = styled.aside`
  display: flex;
  flex-direction: column;
  flex: none;
  width: 498px;
  padding-bottom: 6px;
`;

const WidgetFilterRow = styled.div`
  display: flex;
  flex: none;
  padding: 8px;
`;

const Frame = styled.div`
  display: flex;
  flex: 1;
  min-height: 0;
  margin-left: 12px;
  border: 2px solid #b4b4b4;
  background: #fff;
`;

const WidgetFrame = styled(Frame)`
  margin-left: 0;
`;

const WidgetList = styled.div`
  flex: 1;
  min-width: 0;
  overflow: hidden;
`;

const CategoryButton = styled.button`
  display: flex;
  align-items: center;
  width: 100%;
  height: 34px;
  padding: 0 0 0 10px;
  border: solid #9f9f9f;
  border-width: 2px 0;
  background: linear-gradient(#fff 0 2px, #efefef 2px, #dfdfdf);
  span:last-child { flex: 1; padding: 2px 0 0 3px; text-align: center; }
  section:first-child > & { border-top-color: #fff; }
`;

const ItemList = styled.ul`
  margin: 0;
  padding: 0 0 2px;
  list-style: none;
`;

const Item = styled.li`
  display: flex;
  align-items: center;
  gap: 12px;
  height: 48px;
  padding-left: 8px;
`;

const ItemName = styled.span`
  padding-top: 4px;
  white-space: nowrap;
`;

const ScrollTrack = styled.div`
  display: flex;
  flex-direction: column;
  flex: none;
  width: 28px;
  border-left: 2px solid #b4b4b4;
  background: #e3e3e3;
`;

const ScrollStep = styled(BareButton)`
  height: 28px;
  border: solid #b4b4b4;
  border-width: ${(p) => (p.$last ? '2px 0 0' : '0 0 2px')};
  background: linear-gradient(to right, #fdfdfd, #f2f2f2);
`;

const ScrollSpace = styled.div`
  flex: 1;
  min-height: 0;
`;

const ScrollThumb = styled.div`
  height: ${(p) => p.$size};
  border-bottom: 2px solid #b4b4b4;
  background: linear-gradient(to right, #fdfdfd, #f0f0f0);
`;

/* ---------- form under edit ---------- */

const MdiArea = styled.section`
  position: relative;
  flex: 1;
  min-width: 0;
  overflow: hidden;
  border: 2px solid #b4b4b4;
  border-bottom: none;
  background: #9f9f9f;
`;

const FormWindow = styled.div`
  position: absolute;
  left: 0;
  top: 0;
  display: flex;
  flex-direction: column;
  width: 1094px;
  height: 882px;
`;

const FormTitle = styled.div`
  display: flex;
  align-items: center;
  flex: none;
  height: 48px;
  padding: 0 10px 0 12px;
  border: 2px solid #1c4e72;
  border-radius: 10px 10px 0 0;
  background: linear-gradient(#36a2e6 0, #3290cd 50%, #2d84bd 51%, #308cc6 100%);
`;

const FormName = styled.h2`
  flex: 1;
  margin: 0;
  padding-top: 2px;
  font-size: 24px;
  font-weight: 400;
  text-align: center;
  color: #e8f3fa;
  text-shadow: 2px 2px 0 #1f5f8a;
`;

const FormButton = styled(BareButton)`
  width: 34px;
  height: 36px;
  border: 2px solid #1f5b86;
  border-radius: 5px;
  & + & { margin-left: 6px; }
`;

const FormBody = styled.div`
  display: flex;
  flex: 1;
  border: solid #747474;
  border-width: 0 2px 2px;
  background: #efefef;
  box-shadow: inset 2px 0 0 #fff, inset -2px -2px 0 #c4c4c4;
`;

const DotGrid = styled.div`
  display: flex;
  flex: 1;
  padding: 0 18px 0 0;
  margin: 0 2px 2px;
  background: conic-gradient(from 270deg at 2px 2px, #9f9f9f 0 90deg, transparent 90deg) 4px 0 / 20px 20px content-box;
`;

const LayoutOutline = styled.div`
  flex: 1;
  margin: 18px 4px 22px 22px;
  border: 2px solid #f87878;
`;

/* ---------- right side ---------- */

const RightDocks = styled.aside`
  display: flex;
  flex-direction: column;
  flex: none;
  width: 884px;
  margin-left: -12px;
`;

const InspectorDock = styled.section`
  display: flex;
  flex-direction: column;
  flex: none;
  height: 332px;
  & > :first-child { padding-left: 20px; }
`;

const PropertyDock = styled(InspectorDock)`
  flex: 1;
  min-height: 0;
  height: auto;
`;

const ResourceDock = styled(InspectorDock)`
  height: 372px;
`;

const TablePane = styled.div`
  flex: 1;
  min-width: 0;
  overflow: hidden;
`;

const Table = styled.table`
  width: 100%;
  table-layout: fixed;
  border-collapse: separate;
  border-spacing: 0;
  td { padding: 0; }
`;

const ColObject = styled.col`
  width: 158px;
`;

const ColProperty = styled.col`
  width: 390px;
`;

const HeadCell = styled.th`
  height: 38px;
  padding: 2px 4px 0;
  font-weight: 400;
  text-align: left;
  background: linear-gradient(#fff, #f7f7f7 50%, #f0f0f0 51%, #ebebeb);
  border-bottom: 2px solid #a5a5a5;
  &:first-child { border-right: 2px solid #c4c4c4; }
`;

const TreeRow = styled.tr`
  height: 36px;
  color: ${(p) => (p.$selected ? '#fff' : '#000')};
  background: ${(p) => (p.$selected ? '#308cc6' : '#f7f7f7')};
  ${Triangle} { background: #163c57; }
`;

const TreeCell = styled.div`
  display: flex;
  align-items: center;
  height: 36px;
  padding: 2px 0 0 12px;
  white-space: nowrap;
`;

const TreeIconBox = styled.span`
  margin: 0 12px 0 19px;
  opacity: 0.7;
`;

const ChildCell = styled(TreeCell)`
  padding-left: 86px;
`;

const ClassCell = styled(TreeCell)`
  gap: 12px;
  padding-left: 6px;
`;

const PropertyTools = styled.div`
  display: flex;
  align-items: center;
  gap: 2px;
  flex: none;
  height: 78px;
  padding: 0 8px 0 20px;
`;

const ObjectLabel = styled.div`
  flex: none;
  height: 38px;
  margin: 0 0 2px 12px;
  padding: 4px 4px 0;
  border: 2px solid #b4b4b4;
  background: #f1f1f1;
`;

const NameCell = styled.div`
  display: flex;
  align-items: center;
  height: 36px;
  padding-top: 2px;
  padding-left: ${(p) => (p.$sub ? '86px' : p.$plain && !p.children[0] ? '46px' : '12px')};
  font-weight: ${(p) => (p.$bold ? 700 : 400)};
  white-space: nowrap;
  ${Triangle} { margin-right: 19px; }
`;

const ValueCell = styled.div`
  display: flex;
  align-items: center;
  height: 36px;
  padding: 2px 0 0 6px;
  white-space: nowrap;
`;

const GroupRow = styled.tr`
  color: #fff;
  background: #9f9f9f;
  td { border-bottom: 2px solid #c4c4c4; }
  ${Triangle} { background: #3d3d3d; }
`;

const PropertyRow = styled.tr`
  color: ${(p) => (p.$disabled ? '#bebebe' : '#000')};
  background: ${(p) => p.$bg};
  td { border-bottom: 2px solid #c4c4c4; }
  td:first-child { border-right: 2px solid #c4c4c4; }
`;

const CheckInput = styled.input`
  appearance: none;
  position: relative;
  width: 27px;
  height: 27px;
  margin: 0;
  border: 2px solid #b0b0b0;
  background: #fff;
  &:checked::after {
    content: '';
    position: absolute;
    inset: 3px;
    background: #000;
    clip-path: polygon(0 48%, 18% 40%, 38% 66%, 78% 0, 100% 0, 48% 100%, 28% 100%);
  }
`;

const ResourceTools = styled.div`
  display: flex;
  align-items: center;
  flex: none;
  height: 74px;
  padding: 0 6px 0 19px;
`;

const ResourceFilter = styled.div`
  display: flex;
  width: 368px;
  margin-left: auto;
`;

const ResourceLists = styled.div`
  display: flex;
  flex: 1;
  min-height: 0;
  margin: 0 0 2px 12px;
`;

const ResourceTree = styled.div`
  flex: none;
  width: 432px;
  padding: 2px 46px;
  border: 2px solid #b4b4b4;
  background: #fff;
`;

const InnerSplitter = styled(SplitterV)`
  width: 8px;
`;

const ResourceFiles = styled.div`
  flex: 1;
  border: 2px solid #b4b4b4;
  background: #fff;
`;

const DockTabs = styled.div`
  display: flex;
  flex: none;
  height: 58px;
  margin-left: 12px;
`;

const DockTab = styled.button`
  display: flex;
  align-items: flex-start;
  flex: none;
  padding: ${(p) => (p.$active ? '12px 23px 0' : '8px 23px 0')};
  border: solid #b4b4b4;
  border-width: ${(p) => (p.$active ? '0 2px 0 0' : '2px 2px 0 0')};
  background: ${(p) => (p.$active ? 'linear-gradient(#efefef, #f5f5f5)' : '#dadada')};
  white-space: nowrap;
  &:first-child { border-left-width: 2px; }
`;

const TabFiller = styled.div`
  flex: 1;
  border-top: 2px solid #b4b4b4;
`;

export default App;
